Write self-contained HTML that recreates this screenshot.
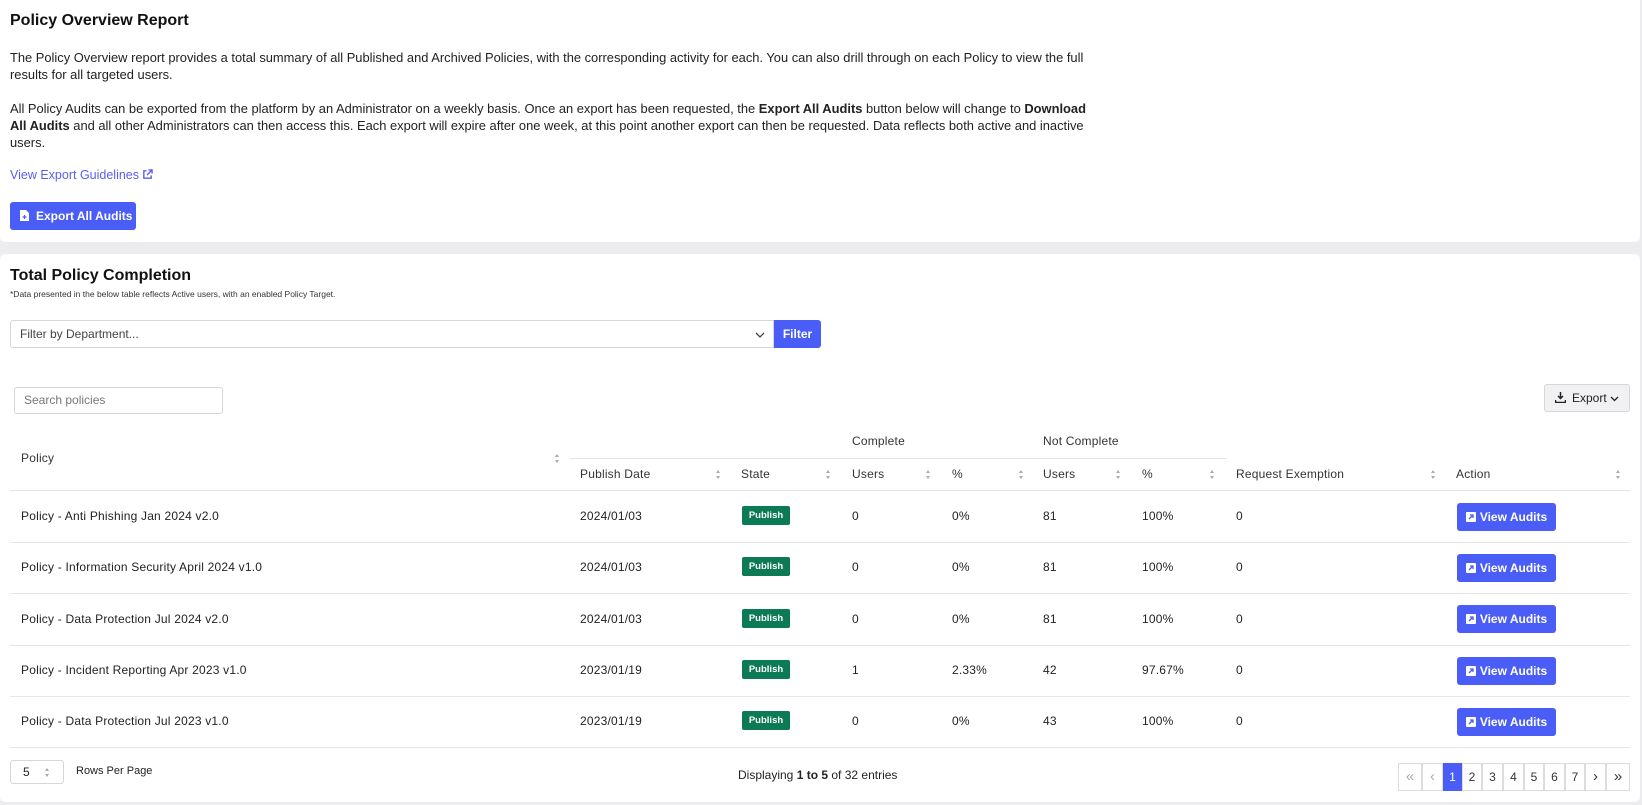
<!DOCTYPE html>
<html><head><meta charset="utf-8"><style>
*{box-sizing:border-box;margin:0;padding:0}
body{width:1642px;height:805px;background:#ececee;font-family:"Liberation Sans",sans-serif;color:#222;overflow:hidden;position:relative}
.card{position:absolute;left:0;width:1640px;background:#fff;border-radius:0 0 5px 5px}
.a{position:absolute;white-space:nowrap}
p.t{font-size:12.9px;line-height:16.8px;color:#222}
.blue{background:#4a5ef7;color:#fff;border-radius:3px;font-weight:bold}
.hd{font-size:12px;color:#333;letter-spacing:.2px}
.srt{position:absolute;width:5px;height:9px}
.srt:before,.srt:after{content:"";position:absolute;left:0;border-left:2.5px solid transparent;border-right:2.5px solid transparent}
.srt:before{top:0;border-bottom:3px solid #aaa}
.srt:after{bottom:0;border-top:3px solid #aaa}
.line{position:absolute;height:1px;background:#e6e6e6}
.cell{font-size:12px;color:#222;letter-spacing:.2px}
.badge{position:absolute;background:#0c7a55;color:#fff;font-size:9.5px;font-weight:bold;border-radius:2px;width:48px;height:19px;line-height:19px;text-align:center}
.va{position:absolute;left:1457px;width:99px;height:28px;font-size:12px;line-height:28px;text-align:center}
.va svg{vertical-align:-1px;margin-right:4px}
.pg{position:absolute;top:763px;height:28px;border:1px solid #dcdcdc;font-size:12px;line-height:26px;text-align:center;color:#333;background:#fff}
</style></head><body>
<div class="card" style="top:0;height:242px"></div>
<div class="a" style="left:10px;top:12px;font-size:16px;font-weight:bold;color:#111">Policy Overview Report</div>
<p class="t a" style="left:10px;top:50px">The Policy Overview report provides a total summary of all Published and Archived Policies, with the corresponding activity for each. You can also drill through on each Policy to view the full<br>results for all targeted users.</p>
<p class="t a" style="left:10px;top:101px">All Policy Audits can be exported from the platform by an Administrator on a weekly basis. Once an export has been requested, the <b>Export All Audits</b> button below will change to <b>Download</b><br><b>All Audits</b> and all other Administrators can then access this. Each export will expire after one week, at this point another export can then be requested. Data reflects both active and inactive<br>users.</p>
<div class="a" style="left:10px;top:168px;font-size:12.5px;color:#5a5ef0">View Export Guidelines <svg width="11" height="11" viewBox="0 0 12 12" style="vertical-align:-1px"><path d="M5 2H2v8h8V7M7 1h4v4M11 1L5.5 6.5" fill="none" stroke="#5a5ef0" stroke-width="1.5"/></svg></div>
<div class="a blue" style="left:10px;top:202px;width:126px;height:28px;font-size:12px;line-height:28px;padding-left:26px"><svg width="9" height="11" viewBox="0 0 9 11" style="position:absolute;left:10px;top:8px"><path d="M0 0h6l3 3v8H0z" fill="#fff"/><path d="M4.5 5v4M2.5 7h4" stroke="#4a5ef7" stroke-width="1.2"/></svg>Export All Audits</div>

<div class="card" style="top:254px;height:548px;border-radius:5px"></div>
<div class="a" style="left:10px;top:267px;font-size:16px;font-weight:bold;color:#111">Total Policy Completion</div>
<div class="a" style="left:10px;top:289px;font-size:8.5px;color:#333">*Data presented in the below table reflects Active users, with an enabled Policy Target.</div>
<div class="a" style="left:10px;top:320px;width:764px;height:28px;border:1px solid #d6d6d6;border-radius:3px 0 0 3px;font-size:12px;line-height:26px;padding-left:9px;color:#444">Filter by Department...<svg width="10" height="6" viewBox="0 0 10 6" style="position:absolute;right:8px;top:11px"><path d="M1 1l4 4 4-4" fill="none" stroke="#444" stroke-width="1.3"/></svg></div>
<div class="a blue" style="left:774px;top:320px;width:47px;height:28px;border-radius:0 3px 3px 0;font-size:12px;line-height:28px;text-align:center">Filter</div>
<div class="a" style="left:14px;top:387px;width:209px;height:27px;border:1px solid #d6d6d6;border-radius:3px;font-size:12px;line-height:25px;padding-left:9px;color:#777">Search policies</div>
<div class="a" style="left:1544px;top:384px;width:86px;height:28px;border:1px solid #d6d6d6;border-radius:3px;background:#f1f1f3;font-size:12px;line-height:26px;padding-left:27px;color:#222"><svg width="11" height="11" viewBox="0 0 11 11" style="position:absolute;left:10px;top:7px"><path d="M5.5 0v6M3 4l2.5 2.5L8 4M0.5 8v2.5h10V8" fill="none" stroke="#222" stroke-width="1.5"/></svg>Export <svg width="9" height="6" viewBox="0 0 9 6"><path d="M1 1l3.5 3.5L8 1" fill="none" stroke="#222" stroke-width="1.3"/></svg></div>

<div class="a hd" style="left:21px;top:451px">Policy</div>
<div class="srt" style="left:555px;top:454px"></div>
<div class="a hd" style="left:852px;top:434px">Complete</div>
<div class="a hd" style="left:1043px;top:434px">Not Complete</div>
<div class="line" style="left:570px;top:458px;width:657px"></div>
<div class="a hd" style="left:580px;top:467px">Publish Date</div><div class="srt" style="left:716px;top:470px"></div>
<div class="a hd" style="left:741px;top:467px">State</div><div class="srt" style="left:826px;top:470px"></div>
<div class="a hd" style="left:852px;top:467px">Users</div><div class="srt" style="left:926px;top:470px"></div>
<div class="a hd" style="left:952px;top:467px">%</div><div class="srt" style="left:1019px;top:470px"></div>
<div class="a hd" style="left:1043px;top:467px">Users</div><div class="srt" style="left:1116px;top:470px"></div>
<div class="a hd" style="left:1142px;top:467px">%</div><div class="srt" style="left:1210px;top:470px"></div>
<div class="a hd" style="left:1236px;top:467px">Request Exemption</div><div class="srt" style="left:1431px;top:470px"></div>
<div class="a hd" style="left:1456px;top:467px">Action</div><div class="srt" style="left:1616px;top:470px"></div>
<div class="line" style="left:10px;top:490px;width:1620px"></div>

<div class="a cell" style="left:21px;top:509px">Policy - Anti Phishing Jan 2024 v2.0</div><div class="a cell" style="left:580px;top:509px">2024/01/03</div><div class="badge" style="left:742px;top:506px">Publish</div><div class="a cell" style="left:852px;top:509px">0</div><div class="a cell" style="left:952px;top:509px">0%</div><div class="a cell" style="left:1043px;top:509px">81</div><div class="a cell" style="left:1142px;top:509px">100%</div><div class="a cell" style="left:1236px;top:509px">0</div>
<div class="va blue" style="top:503px"><svg width="10" height="10" viewBox="0 0 10 10"><rect width="10" height="10" rx="1" fill="#fff"/><path d="M3 7l4-4M4 3h3v3" fill="none" stroke="#4a5ef7" stroke-width="1.3"/></svg>View Audits</div>
<div class="line" style="left:10px;top:542px;width:1620px"></div>

<div class="a cell" style="left:21px;top:560px">Policy - Information Security April 2024 v1.0</div><div class="a cell" style="left:580px;top:560px">2024/01/03</div><div class="badge" style="left:742px;top:557px">Publish</div><div class="a cell" style="left:852px;top:560px">0</div><div class="a cell" style="left:952px;top:560px">0%</div><div class="a cell" style="left:1043px;top:560px">81</div><div class="a cell" style="left:1142px;top:560px">100%</div><div class="a cell" style="left:1236px;top:560px">0</div>
<div class="va blue" style="top:554px"><svg width="10" height="10" viewBox="0 0 10 10"><rect width="10" height="10" rx="1" fill="#fff"/><path d="M3 7l4-4M4 3h3v3" fill="none" stroke="#4a5ef7" stroke-width="1.3"/></svg>View Audits</div>
<div class="line" style="left:10px;top:593px;width:1620px"></div>

<div class="a cell" style="left:21px;top:612px">Policy - Data Protection Jul 2024 v2.0</div><div class="a cell" style="left:580px;top:612px">2024/01/03</div><div class="badge" style="left:742px;top:609px">Publish</div><div class="a cell" style="left:852px;top:612px">0</div><div class="a cell" style="left:952px;top:612px">0%</div><div class="a cell" style="left:1043px;top:612px">81</div><div class="a cell" style="left:1142px;top:612px">100%</div><div class="a cell" style="left:1236px;top:612px">0</div>
<div class="va blue" style="top:605px"><svg width="10" height="10" viewBox="0 0 10 10"><rect width="10" height="10" rx="1" fill="#fff"/><path d="M3 7l4-4M4 3h3v3" fill="none" stroke="#4a5ef7" stroke-width="1.3"/></svg>View Audits</div>
<div class="line" style="left:10px;top:645px;width:1620px"></div>

<div class="a cell" style="left:21px;top:663px">Policy - Incident Reporting Apr 2023 v1.0</div><div class="a cell" style="left:580px;top:663px">2023/01/19</div><div class="badge" style="left:742px;top:660px">Publish</div><div class="a cell" style="left:852px;top:663px">1</div><div class="a cell" style="left:952px;top:663px">2.33%</div><div class="a cell" style="left:1043px;top:663px">42</div><div class="a cell" style="left:1142px;top:663px">97.67%</div><div class="a cell" style="left:1236px;top:663px">0</div>
<div class="va blue" style="top:657px"><svg width="10" height="10" viewBox="0 0 10 10"><rect width="10" height="10" rx="1" fill="#fff"/><path d="M3 7l4-4M4 3h3v3" fill="none" stroke="#4a5ef7" stroke-width="1.3"/></svg>View Audits</div>
<div class="line" style="left:10px;top:696px;width:1620px"></div>

<div class="a cell" style="left:21px;top:714px">Policy - Data Protection Jul 2023 v1.0</div><div class="a cell" style="left:580px;top:714px">2023/01/19</div><div class="badge" style="left:742px;top:711px">Publish</div><div class="a cell" style="left:852px;top:714px">0</div><div class="a cell" style="left:952px;top:714px">0%</div><div class="a cell" style="left:1043px;top:714px">43</div><div class="a cell" style="left:1142px;top:714px">100%</div><div class="a cell" style="left:1236px;top:714px">0</div>
<div class="va blue" style="top:708px"><svg width="10" height="10" viewBox="0 0 10 10"><rect width="10" height="10" rx="1" fill="#fff"/><path d="M3 7l4-4M4 3h3v3" fill="none" stroke="#4a5ef7" stroke-width="1.3"/></svg>View Audits</div>
<div class="line" style="left:10px;top:747px;width:1620px"></div>

<div class="a" style="left:10px;top:760px;width:54px;height:24px;border:1px solid #d6d6d6;border-radius:3px;font-size:12px;line-height:22px;padding-left:12px">5<div class="srt" style="left:34px;top:7px"></div></div>
<div class="a" style="left:76px;top:765px;font-size:11px;color:#222">Rows Per Page</div>
<div class="a" style="left:738px;top:768px;font-size:12px;color:#222">Displaying <b>1 to 5</b> of 32 entries</div>
<div class="pg" style="left:1398px;width:24px;color:#aaa;font-size:15px">«</div>
<div class="pg" style="left:1422px;width:21px;color:#aaa;font-size:15px">‹</div>
<div class="pg" style="left:1443px;width:19px;background:#4a5ef7;border-color:#4a5ef7;color:#fff">1</div>
<div class="pg" style="left:1462px;width:20px">2</div>
<div class="pg" style="left:1482px;width:21px">3</div>
<div class="pg" style="left:1503px;width:21px">4</div>
<div class="pg" style="left:1524px;width:20px">5</div>
<div class="pg" style="left:1544px;width:21px">6</div>
<div class="pg" style="left:1565px;width:20px">7</div>
<div class="pg" style="left:1585px;width:21px;font-size:15px">›</div>
<div class="pg" style="left:1606px;width:24px;font-size:15px">»</div>
</body></html>
